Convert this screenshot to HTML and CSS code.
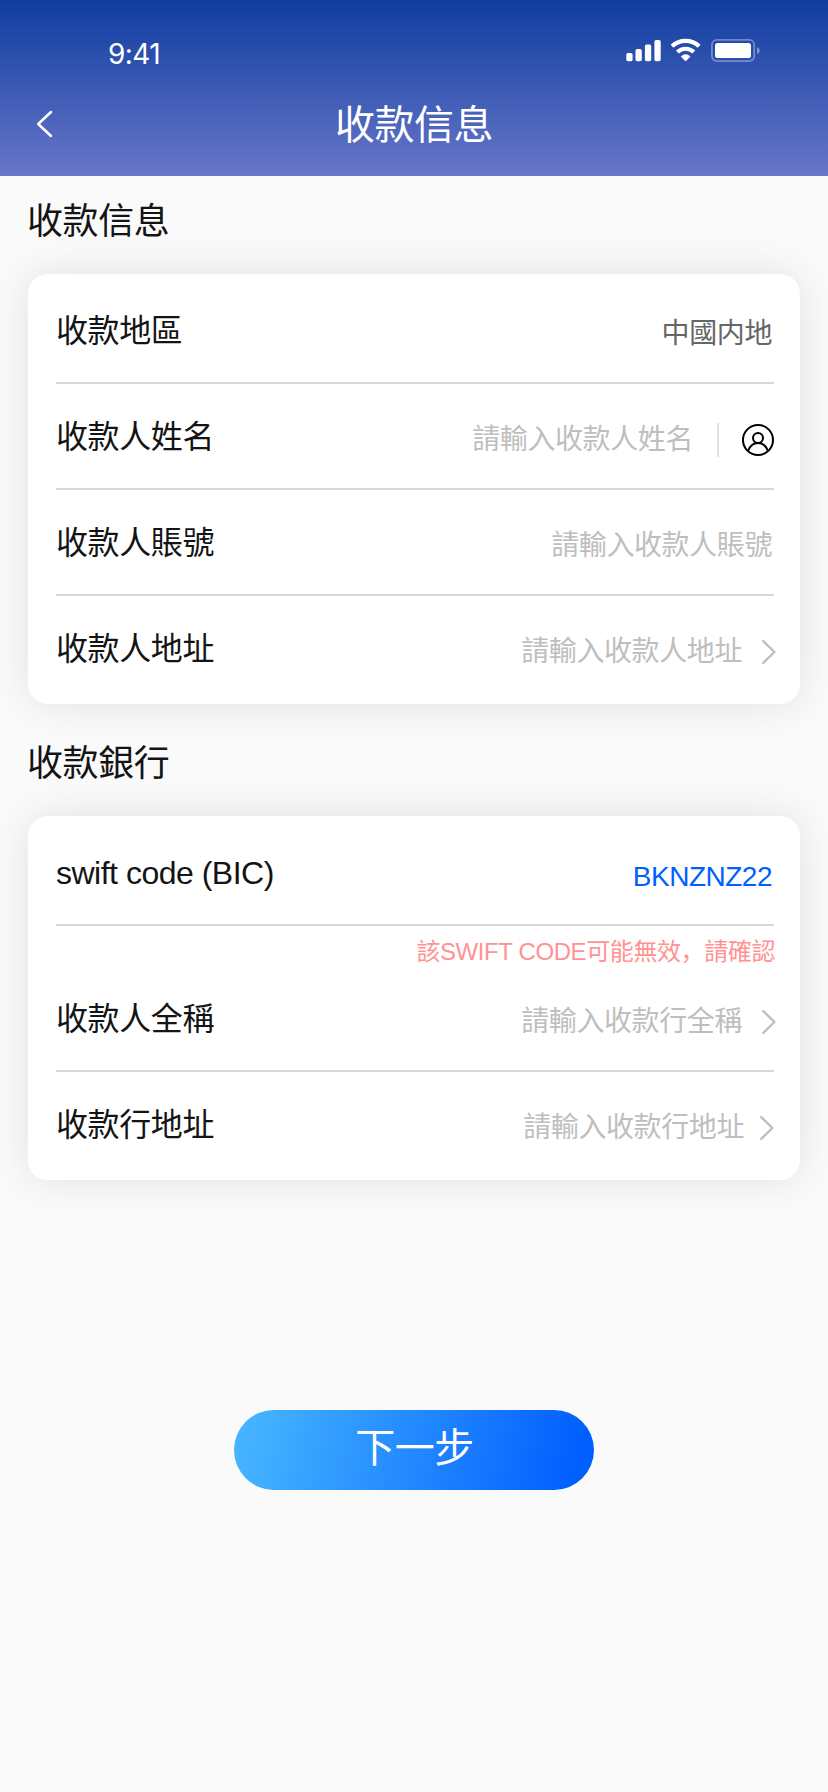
FILE: index.html
```html
<!DOCTYPE html>
<html lang="zh-Hans">
<head>
<meta charset="utf-8">
<title>收款信息</title>
<link rel="stylesheet" href="styles.css">
</head>
<body>
<header class="header">
  <div class="status">
    <span class="time">9:41</span>
    <svg class="status-icons" width="136" height="26" viewBox="626 38 136 26" fill="#fff">
      <rect x="626.3" y="53" width="6.3" height="8.3" rx="1.7"/>
      <rect x="635.5" y="49" width="6.3" height="12.3" rx="1.7"/>
      <rect x="644.9" y="44.600" width="6.3" height="16.7" rx="1.7"/>
      <rect x="654.4" y="40" width="6.3" height="21.3" rx="1.7"/>
      <path d="M672 46.3A20 20 0 0 1 699.2 46.3M677.4 52A12 12 0 0 1 693.8 52" fill="none" stroke="#fff" stroke-width="4.2"/>
      <path d="M680.8 56.4Q685.6 52.2 690.4 56.4L686.3 60.7Q685.6 61.3 684.9 60.7Z"/>
      <rect x="711.9" y="39.900" width="42.3" height="21.2" rx="5" fill="none" stroke="#fff" stroke-opacity=".35" stroke-width="1.8"/>
      <path d="M757 47Q759.8 48 759.8 50.5T757 54Z" fill-opacity=".4"/>
      <rect x="715" y="43" width="36" height="15" rx="2.5"/>
    </svg>
  </div>
  <div class="nav">
    <svg class="back" width="18" height="28" viewBox="0 0 18 28"><path d="M15 2L2.200 14L15 26" fill="none" stroke="#fff" stroke-width="2.5" stroke-linecap="round" stroke-linejoin="round"/></svg>
    <h1 class="title">收款信息</h1>
  </div>
</header>
<main>
  <h2 class="section-title">收款信息</h2>
  <section class="card">
    <div class="row"><span class="label">收款地區</span><span class="value filled">中國内地</span></div>
    <div class="row">
      <span class="label">收款人姓名</span><span class="value">請輸入收款人姓名</span>
      <span class="divider"></span>
      <svg class="user" width="32" height="32" viewBox="0 0 32 32" fill="none" stroke="#000" stroke-width="2"><circle cx="16" cy="16" r="15"/><circle cx="16" cy="13.900" r="5"/><path d="M6 27C8 21.800 11.300 19 16 19S24 21.800 26 27"/></svg>
    </div>
    <div class="row"><span class="label">收款人賬號</span><span class="value">請輸入收款人賬號</span></div>
    <div class="row">
      <span class="label">收款人地址</span><span class="value">請輸入收款人地址</span>
      <svg class="chevron" width="14" height="26" viewBox="0 0 14 26"><path d="M1.200 2L12.400 13L1.200 24"/></svg>
    </div>
  </section>
  <h2 class="section-title bank">收款銀行</h2>
  <section class="card">
    <div class="row"><span class="label latin">swift code (BIC)</span><span class="value code">BKNZNZ22</span></div>
    <p class="error">該SWIFT CODE可能無效，請確認</p>
    <div class="row">
      <span class="label">收款人全稱</span><span class="value">請輸入收款行全稱</span>
      <svg class="chevron" width="14" height="26" viewBox="0 0 14 26"><path d="M1.200 2L12.400 13L1.200 24"/></svg>
    </div>
    <div class="row">
      <span class="label">收款行地址</span><span class="value">請輸入收款行地址</span>
      <svg class="chevron inset" width="14" height="26" viewBox="0 0 14 26"><path d="M1.200 2L12.400 13L1.200 24"/></svg>
    </div>
  </section>
  <button class="next" type="button">下一步</button>
</main>
</body>
</html>
```
FILE: styles.css
```css
* { box-sizing: border-box; }
body {
  margin: 0;
  min-height: 1792px;
  background: #fafafa;
  color: #141414;
  font-family: "Liberation Sans", "Noto Sans CJK SC", sans-serif;
}
.header {
  height: 176px;
  background: linear-gradient(180deg, #0f3da0 0%, #6876c8 100%);
  color: #fff;
}
.status {
  display: flex;
  justify-content: space-between;
  align-items: flex-start;
  height: 88px;
  padding: 38px 66px 0 108px;
}
.time {
  font: 400 28px/33px Inter, sans-serif;
  letter-spacing: -.6px;
}
.nav {
  display: grid;
  grid-template-columns: 60px 1fr 60px;
  align-items: center;
  height: 72px;
}
.back { margin-left: 36px; }
.title {
  margin: 0;
  padding-top: 2px;
  text-align: center;
  font-size: 40px;
  line-height: 56px;
  font-weight: 400;
  letter-spacing: -.5px;
}
.section-title {
  height: 98px;
  margin: 0;
  padding: 21px 27px 0;
  font-size: 36px;
  line-height: 50px;
  font-weight: 400;
  letter-spacing: -.4px;
}
.bank { height: 112px; padding-top: 35px; }
.card {
  margin: 0 28px;
  padding: 4px 26px 4px 28px;
  border-radius: 20px;
  background: #fff;
  box-shadow: 0 0 40px rgba(0, 0, 0, .1);
}
.row {
  display: flex;
  align-items: center;
  height: 106px;
  border-bottom: 2px solid #d8d8d8;
}
.row:last-child { height: 104px; border-bottom: 0; }
.label {
  flex: 1;
  padding-top: 2px;
  font-size: 32px;
  line-height: 46px;
  letter-spacing: -.4px;
}
.latin { letter-spacing: -.5px; }
.value {
  margin-right: 2px;
  padding-top: 7px;
  color: #bebebe;
  font-size: 28px;
  line-height: 40px;
  letter-spacing: -.4px;
}
.filled { color: #666; }
.code {
  padding-top: 9px;
  color: #0060ff;
  letter-spacing: -.5px;
}
.divider {
  width: 2px;
  height: 34px;
  margin: 8px 23px 0 22px;
  background: #e0e0e0;
}
.user { margin-top: 8px; }
.chevron {
  margin: 8px -2px 0 18px;
  fill: none;
  stroke: #bebebe;
  stroke-width: 2.4;
  stroke-linecap: round;
  stroke-linejoin: round;
}
.inset { margin: 8px 0 0 14px; }
.error {
  height: 40px;
  margin: 0 -1px 0 0;
  padding-top: 9px;
  color: #ff9292;
  font-size: 24px;
  line-height: 34px;
  letter-spacing: -.4px;
  text-align: right;
}
.next {
  display: block;
  width: 360px;
  height: 80px;
  margin: 230px auto 0;
  padding: 0 0 4px 1px;
  border: 0;
  border-radius: 40px;
  background: linear-gradient(102deg, #45b3ff 5%, #005eff 95%);
  color: #fff;
  font: 400 40px/56px "Liberation Sans", "Noto Sans CJK SC", sans-serif;
  letter-spacing: -.5px;
}
```
